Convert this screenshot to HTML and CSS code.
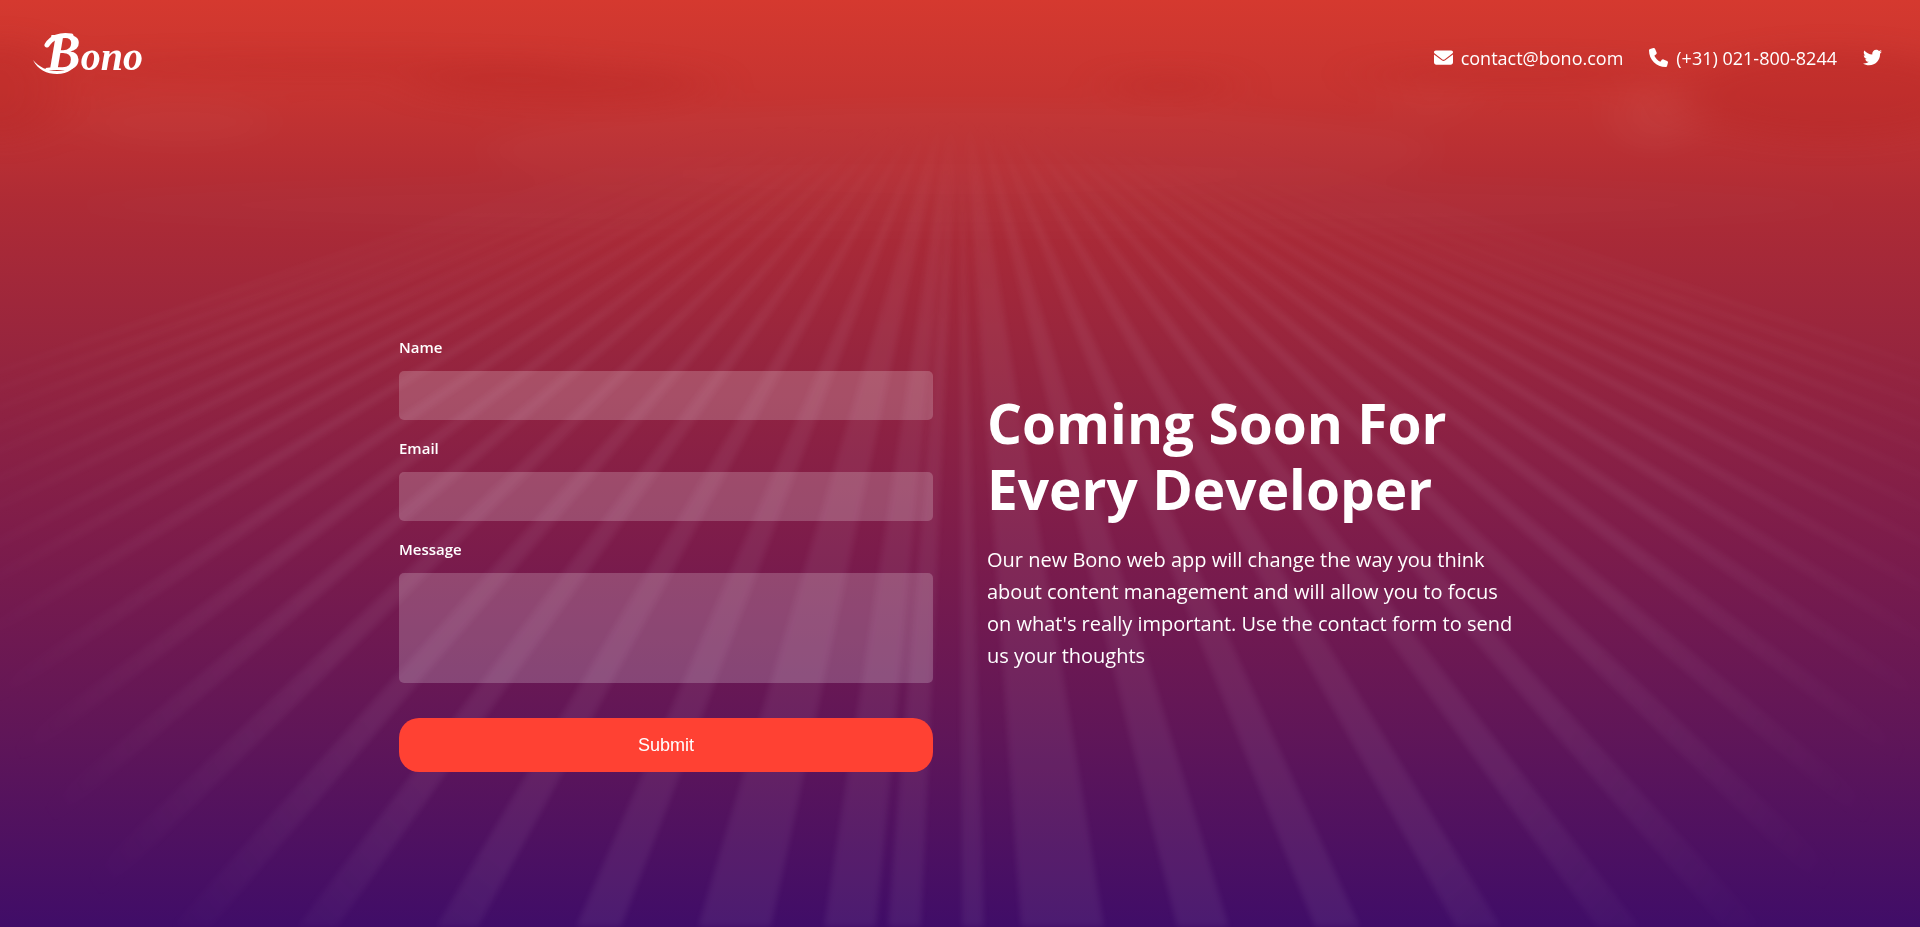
FILE: index.html
```html
<!DOCTYPE html>
<html lang="en">
<head>
<meta charset="utf-8">
<meta name="viewport" content="width=device-width, initial-scale=1">
<title>Bono | Coming Soon</title>
<link rel="stylesheet" href="styles.css">
</head>
<body>
<div class="page">
  <svg class="backdrop" viewBox="0 0 1920 927" preserveAspectRatio="xMidYMid slice" aria-hidden="true">
    <defs>
      <filter id="soft" filterUnits="userSpaceOnUse" x="-40" y="0" width="2000" height="980" color-interpolation-filters="sRGB"><feGaussianBlur stdDeviation="3"/></filter>
      <filter id="cloud" filterUnits="userSpaceOnUse" x="-300" y="-200" width="2520" height="700" color-interpolation-filters="sRGB"><feGaussianBlur stdDeviation="24 12"/></filter>
      <linearGradient id="fade" gradientUnits="userSpaceOnUse" x1="0" y1="115" x2="0" y2="340">
        <stop offset="0" stop-color="#000"/><stop offset="0.5" stop-color="#ccc"/><stop offset="1" stop-color="#fff"/>
      </linearGradient>
      <radialGradient id="corner" gradientUnits="userSpaceOnUse" cx="960" cy="300" r="1200">
        <stop offset="0.6" stop-color="#000" stop-opacity="0"/><stop offset="0.88" stop-color="#000"/>
      </radialGradient>
      <mask id="field" maskUnits="userSpaceOnUse" x="0" y="0" width="1920" height="927">
        <rect width="1920" height="927" fill="url(#fade)"/>
        <rect width="1920" height="927" fill="url(#corner)"/>
      </mask>
    </defs>
    <g filter="url(#cloud)">
      <ellipse cx="0" cy="90" rx="60" ry="50" fill="#b02020" opacity=".25"/>
      <ellipse cx="320" cy="66" rx="260" ry="9" fill="#b02020" opacity=".2"/>
      <ellipse cx="560" cy="84" rx="150" ry="18" fill="#b02020" opacity=".25"/>
      <ellipse cx="1170" cy="85" rx="60" ry="8" fill="#b02020" opacity=".3"/>
      <ellipse cx="1520" cy="74" rx="160" ry="10" fill="#b02020" opacity=".25"/>
      <ellipse cx="1830" cy="95" rx="150" ry="45" fill="#b02020" opacity=".28"/>
      <ellipse cx="180" cy="122" rx="100" ry="26" fill="#fff" opacity=".02"/>
      <ellipse cx="1655" cy="116" rx="40" ry="34" fill="#fff" opacity=".04"/>
      <ellipse cx="1430" cy="104" rx="44" ry="20" fill="#fff" opacity=".02"/>
      <ellipse cx="960" cy="150" rx="480" ry="45" fill="#fff" opacity=".025"/>
      <ellipse cx="960" cy="205" rx="900" ry="30" fill="#fff" opacity=".015"/>
    </g>
    <g mask="url(#field)">
      <path class="rays" filter="url(#soft)" d="
        M960 45L698 927H771Z M960 45L824 927H876Z M960 45L888 927H921Z M960 45L962 927H984Z
        M960 45L1021 927H1104Z M960 45L1177 927H1229Z M960 45L1315 927H1360Z M960 45L1456 927H1501Z
        M960 45L1597 927H1640Z M960 45L1722 927H1764Z M960 45L1857 927H1899Z M960 45L1981 927H2023Z
        M960 45L2111 927H2153Z M960 45L2240 927H2282Z M960 45L2369 927H2411Z M960 45L2504 927H2546Z
        M960 45L2643 927H2685Z M960 45L2774 927H2816Z M960 45L2909 927H2951Z M960 45L3039 927H3081Z
        M960 45L3169 927H3211Z M960 45L3304 927H3346Z M960 45L3440 927H3482Z M960 45L3580 927H3622Z
        M960 45L576 927H621Z M960 45L436 927H478Z M960 45L297 927H337Z M960 45L171 927H211Z
        M960 45L32 927H72Z M960 45L-105 927H-65Z M960 45L-235 927H-193Z M960 45L-370 927H-328Z
        M960 45L-521 927H-479Z M960 45L-659 927H-617Z M960 45L-765 927H-723Z M960 45L-902 927H-860Z
        M960 45L-1016 927H-974Z M960 45L-1152 927H-1110Z M960 45L-1272 927H-1230Z M960 45L-1400 927H-1358Z
        M960 45L-1530 927H-1488Z M960 45L-1660 927H-1618Z"/>
    </g>
  </svg>

  <header class="header">
    <a class="logo" href="#" aria-label="Bono">
      <svg width="112" height="44" viewBox="0 0 112 44" aria-hidden="true">
        <path d="M0 28C5 38 14 42 24 42C35 42 43 36 45 28C42 34 34 39 24 39C14 39 6 35 0 28Z" fill="currentColor"/>
        <path d="M14 13C18 6 27 2 38 4" fill="none" stroke="currentColor" stroke-width="5" stroke-linecap="round"/>
        <text class="logo-text" x="13" y="38"><tspan class="logo-initial">B</tspan>ono</text>
      </svg>
    </a>
    <nav class="contacts">
      <a class="contact" href="mailto:contact@bono.com">
        <svg class="icon" viewBox="0 0 512 512" aria-hidden="true"><path d="M48 64C21.500 64 0 85.500 0 112c0 15.100 7.100 29.300 19.200 38.400L236.800 313.600c11.400 8.500 27 8.500 38.400 0L492.800 150.400c12.100-9.100 19.200-23.300 19.200-38.400c0-26.500-21.500-48-48-48H48zM0 176V384c0 35.300 28.700 64 64 64H448c35.300 0 64-28.700 64-64V176L294.400 339.200c-22.800 17.100-54 17.100-76.800 0L0 176z"/></svg>
        <span>contact@bono.com</span>
      </a>
      <a class="contact" href="tel:+310218008244">
        <svg class="icon" viewBox="0 0 512 512" aria-hidden="true"><path d="M164.900 24.600c-7.700-18.600-28-28.500-47.400-23.200l-88 24C12.100 30.200 0 46 0 64C0 311.400 200.600 512 448 512c18 0 33.800-12.100 38.600-29.500l24-88c5.300-19.400-4.600-39.700-23.200-47.400l-96-40c-16.300-6.800-35.200-2.100-46.300 11.600L304.700 368C234.300 334.700 177.300 277.700 144 207.300L193.300 167c13.700-11.200 18.400-30 11.600-46.300l-40-96z"/></svg>
        <span>(+31) 021-800-8244</span>
      </a>
      <a class="contact" href="#" aria-label="Twitter">
        <svg class="icon" viewBox="0 0 512 512" aria-hidden="true"><path d="M459.370 151.716c.325 4.548.325 9.097.325 13.645 0 138.720-105.583 298.558-298.558 298.558-59.452 0-114.680-17.219-161.137-47.106 8.447.974 16.568 1.299 25.340 1.299 49.055 0 94.213-16.568 130.274-44.832-46.132-.975-84.792-31.188-98.112-72.772 6.498.974 12.995 1.624 19.818 1.624 9.421 0 18.843-1.300 27.614-3.573-48.081-9.747-84.143-51.980-84.143-102.985v-1.299c13.969 7.797 30.214 12.670 47.431 13.319-28.264-18.843-46.781-51.005-46.781-87.391 0-19.492 5.197-37.360 14.294-52.954 51.655 63.675 129.300 105.258 216.365 109.807-1.624-7.797-2.599-15.918-2.599-24.040 0-57.828 46.782-104.934 104.934-104.934 30.213 0 57.502 12.670 76.670 33.137 23.715-4.548 46.456-13.320 66.599-25.340-7.798 24.366-24.366 44.833-46.132 57.827 21.117-2.273 41.584-8.122 60.426-16.243-14.292 20.791-32.161 39.308-52.628 54.253z"/></svg>
      </a>
    </nav>
  </header>

  <main class="main">
    <form class="form">
      <label class="label" for="name">Name</label>
      <input class="field" type="text" id="name" name="name">
      <label class="label" for="email">Email</label>
      <input class="field" type="email" id="email" name="email">
      <label class="label" for="message">Message</label>
      <textarea class="field field-area" id="message" name="message"></textarea>
      <button class="submit" type="submit">Submit</button>
    </form>
    <section class="copy">
      <h1 class="title">Coming Soon For Every Developer</h1>
      <p class="lead">Our new Bono web app will change the way you think about content management and will allow you to focus on what's really important. Use the contact form to send us your thoughts</p>
    </section>
  </main>
</div>
</body>
</html>
```

FILE: styles.css
```css
* {
  box-sizing: border-box;
  margin: 0;
  padding: 0;
}

body {
  font-family: "Open Sans", "Noto Sans", sans-serif;
  color: #fff;
  line-height: 1.6;
}

.page {
  position: relative;
  display: flex;
  flex-direction: column;
  min-height: 100vh;
  overflow: hidden;
  background: linear-gradient(180deg, #d5392f 0%, #c63431 10%, #ae2b35 22%, #97253e 38%, #7c1c4b 59%, #601658 79%, #400d68 100%);
}

.backdrop {
  position: absolute;
  inset: 0;
  width: 100%;
  height: 100%;
}

.rays {
  fill: #f0d8f0;
  opacity: .065;
}

.header {
  position: relative;
  display: flex;
  justify-content: space-between;
  align-items: center;
  padding: 32px 38px 32px 33px;
}

.logo {
  display: block;
  height: 44px;
  color: #fff;
}

.logo svg {
  display: block;
  overflow: visible;
}

.logo-text {
  font: italic bold 40px "Liberation Serif", serif;
  fill: currentColor;
}

.logo-initial {
  font-size: 52px;
}

.contacts {
  display: flex;
  align-items: center;
  gap: 26px;
  padding-top: 8px;
}

.contact {
  display: flex;
  align-items: center;
  gap: 8px;
  font-size: 18px;
  color: #fff;
  text-decoration: none;
}

.icon {
  width: 19px;
  height: 19px;
  fill: currentColor;
}

.main {
  position: relative;
  flex: 1;
  display: grid;
  grid-template-columns: 1fr 1fr;
  gap: 54px;
  align-items: center;
  width: 100%;
  max-width: 1162px;
  margin: 0 auto;
  padding: 72px 20px 0;
}

.form {
  display: flex;
  flex-direction: column;
}

.label {
  margin-bottom: 12px;
  font-size: 15px;
  font-weight: 600;
}

.field {
  width: 100%;
  height: 49px;
  margin-bottom: 16px;
  padding: 12px;
  border: 0;
  border-radius: 5px;
  background: rgba(255, 255, 255, .2);
  color: #fff;
  font: 16px "Open Sans", sans-serif;
}

.field-area {
  height: 110px;
  margin-bottom: 35px;
  resize: none;
}

.submit {
  height: 54px;
  border: 0;
  border-radius: 20px;
  background: #ff4133;
  color: #fff;
  font: 18px "Liberation Sans", Arial, sans-serif;
  cursor: pointer;
}

.copy {
  padding-bottom: 45px;
}

.title {
  margin-bottom: 22px;
  font-size: 55px;
  font-weight: 700;
  line-height: 66px;
}

.lead {
  font-size: 20px;
  line-height: 32px;
}

@media (max-width: 800px) {
  .header {
    flex-wrap: wrap;
    gap: 16px;
  }

  .contacts {
    flex-wrap: wrap;
  }

  .main {
    grid-template-columns: 1fr;
  }
}
```
